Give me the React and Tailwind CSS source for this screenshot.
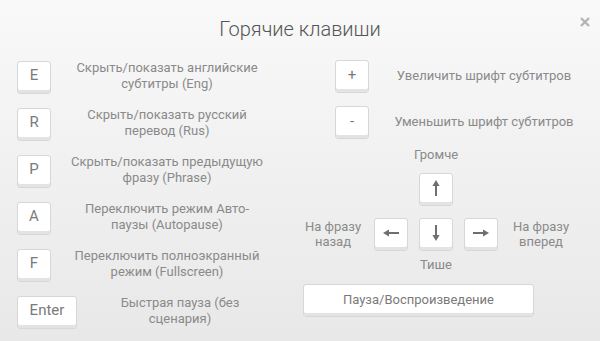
import React from 'react';

const font = "font-['Roboto','Liberation_Sans',sans-serif]";

// клавиша с "толстым" нижним краем
const Key = ({ children, className = 'w-[34px]', size = 'text-[15px]' }) => (
  <div
    className={`${className} ${size} h-[33px] shrink-0 flex items-center justify-center pb-[3px] bg-white border border-[#d7d7d7] rounded-[3px] shadow-[inset_0_-3px_0_#e3e3e3] text-[#7a7a7a] leading-none`}
  >
    {children}
  </div>
);

const Arrow = ({ rotate = '' }) => (
  <svg width="8" height="16" viewBox="0 0 8 16" className={rotate}>
    <polygon points="4,0 7.6,6 5,6 5,16 3,16 3,6 0.4,6" fill="#6f6f6f" />
  </svg>
);

const leftRows = [
  ['E', 'Скрыть/показать английские', 'субтитры (Eng)'],
  ['R', 'Скрыть/показать русский', 'перевод (Rus)'],
  ['P', 'Скрыть/показать предыдущую', 'фразу (Phrase)'],
  ['A', 'Переключить режим Авто-', 'паузы (Autopause)'],
  ['F', 'Переключить полноэкранный', 'режим (Fullscreen)'],
];

const App = () => {
  return (
    <div className={`relative w-[600px] h-[341px] overflow-hidden bg-gradient-to-b from-[#f9f9f9] to-[#e8e8e8] ${font}`}>
      {/* заголовок */}
      <div className="pt-[16px] h-[60px] text-center text-[20px] leading-[26px] font-light text-[#555]">
        Горячие клавиши
      </div>
      <button className="absolute top-[17px] left-[580px] w-[10px] h-[10px]">
        <svg width="10" height="10" viewBox="0 0 10 10">
          <path d="M1 1L9 9M9 1L1 9" stroke="#b3b3b3" strokeWidth="2.4" />
        </svg>
      </button>

      <div className="flex pl-[17px]">
        {/* левая колонка */}
        <div className="w-[266px] flex flex-col gap-[13px]">
          {leftRows.map(([k, a, b]) => (
            <div key={k} className="flex items-center">
              <Key>{k}</Key>
              <div className="flex-1 text-center text-[13px] leading-[16px] text-[#8a8a8a] pb-[2px]">
                <div>{a}</div>
                <div>{b}</div>
              </div>
            </div>
          ))}
          <div className="flex items-center">
            <Key className="w-[60px]">Enter</Key>
            <div className="flex-1 text-center text-[13px] leading-[16px] text-[#8a8a8a] pb-[2px]">
              <div>Быстрая пауза (без</div>
              <div>сценария)</div>
            </div>
          </div>
        </div>

        {/* правая колонка */}
        <div className="ml-[20px] w-[296px] flex flex-col">
          <div className="flex items-center pl-[32px]">
            <Key>+</Key>
            <div className="flex-1 text-center text-[13px] leading-[16px] text-[#8a8a8a] pb-[2px]">
              Увеличить шрифт субтитров
            </div>
          </div>
          <div className="flex items-center pl-[32px] mt-[13px]">
            <Key>-</Key>
            <div className="flex-1 text-center text-[13px] leading-[16px] text-[#8a8a8a] pb-[2px]">
              Уменьшить шрифт субтитров
            </div>
          </div>

          <div className="ml-[116px] w-[34px] mt-[8px] flex justify-center whitespace-nowrap text-[13px] leading-[16px] text-[#8a8a8a]">
            Громче
          </div>
          <div className="ml-[116px] mt-[10px]">
            <Key><Arrow /></Key>
          </div>

          <div className="flex items-center mt-[12px]">
            <div className="w-[60px] text-center text-[13px] leading-[15px] text-[#8a8a8a] pb-[2px]">
              <div>На фразу</div>
              <div>назад</div>
            </div>
            <div className="ml-[11px] flex gap-[11px]">
              <Key><Arrow rotate="-rotate-90" /></Key>
              <Key><Arrow rotate="rotate-180" /></Key>
              <Key><Arrow rotate="rotate-90" /></Key>
            </div>
            <div className="ml-[13px] w-[60px] text-center text-[13px] leading-[15px] text-[#8a8a8a] pb-[2px]">
              <div>На фразу</div>
              <div>вперед</div>
            </div>
          </div>

          <div className="ml-[116px] w-[34px] mt-[6px] flex justify-center whitespace-nowrap text-[13px] leading-[16px] text-[#8a8a8a]">
            Тише
          </div>

          <div className="mt-[11px]">
            <Key className="w-[231px]" size="text-[13px]">Пауза/Воспроизведение</Key>
          </div>
        </div>
      </div>
    </div>
  );
};

export default App;
